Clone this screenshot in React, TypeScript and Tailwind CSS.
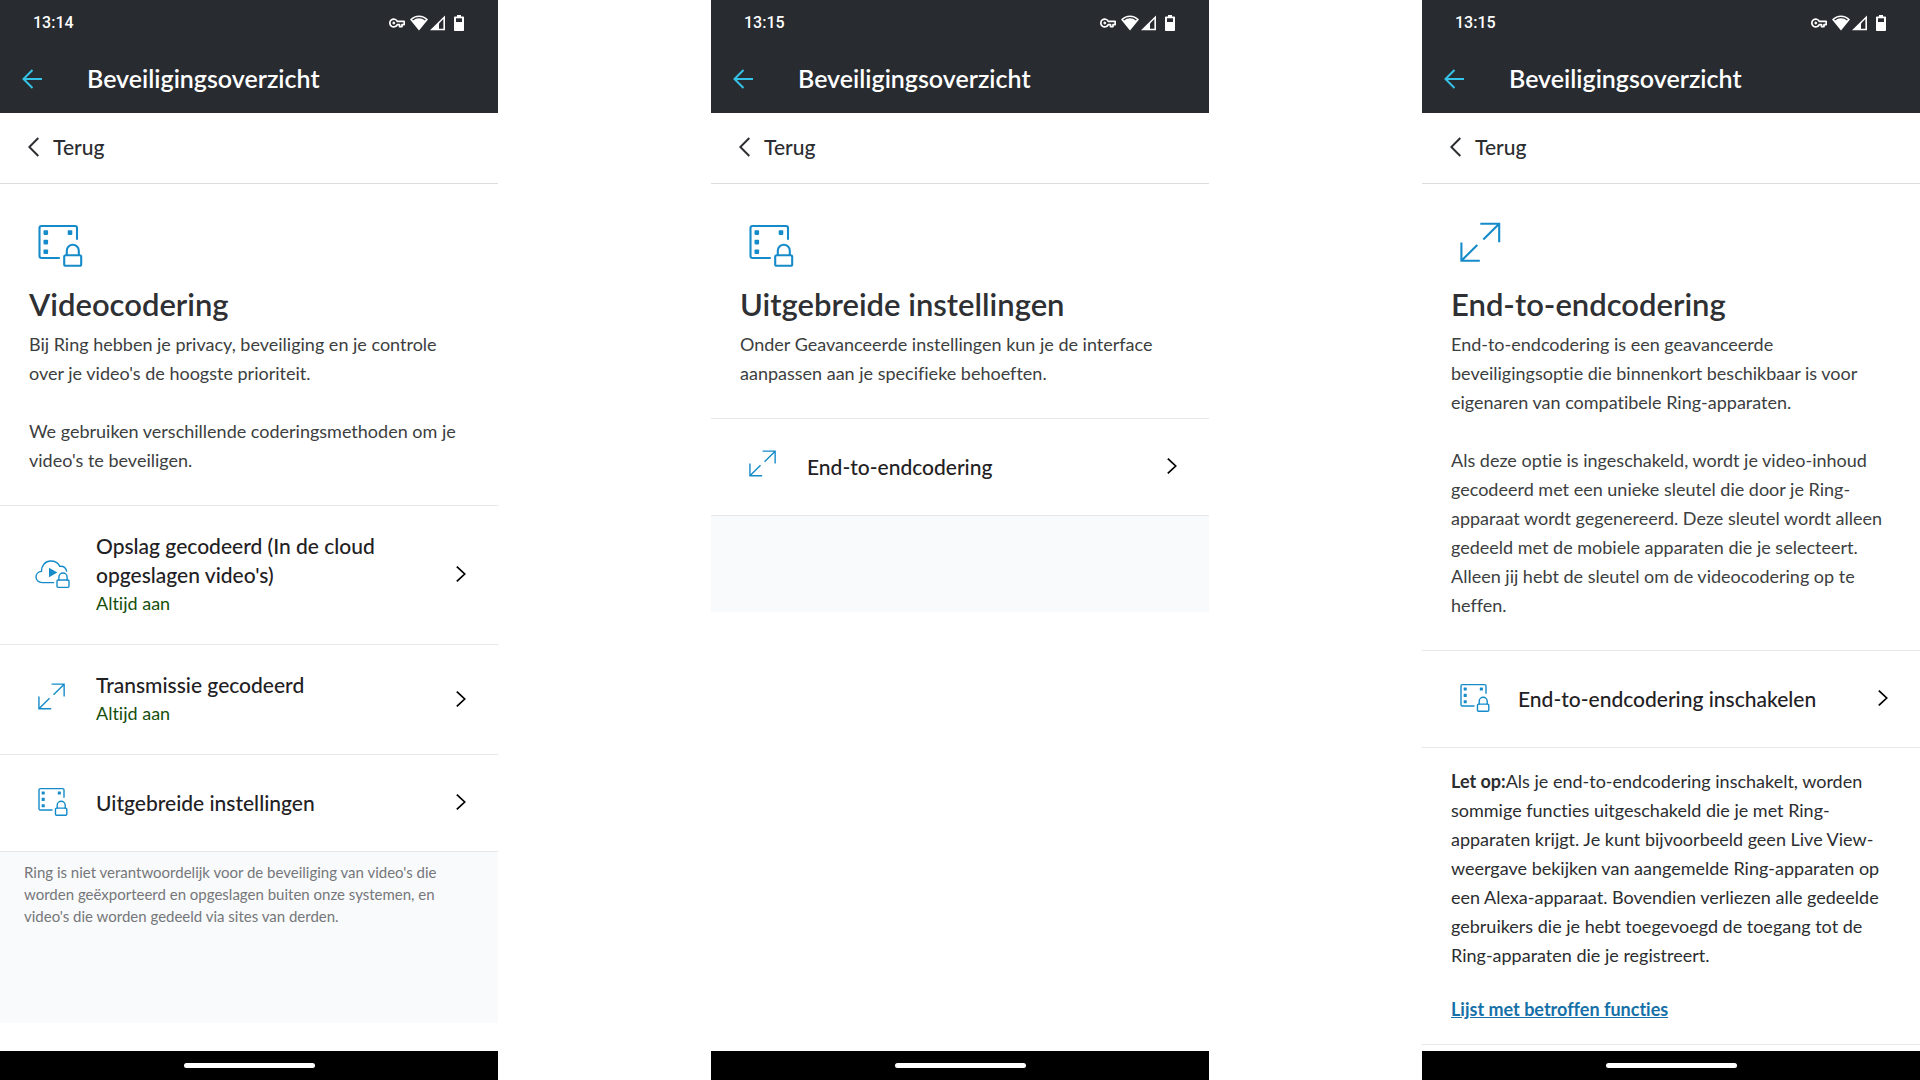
import type { ReactNode } from 'react';

type IconProps = { className?: string };

function FilmLockIcon({ className }: IconProps) {
  return (
    <svg viewBox="0 0 60 60" fill="none" stroke="currentColor" strokeWidth="2.1" strokeLinecap="round" className={className}>
      <path d="M30 42H12.5a2 2 0 0 1-2-2V12a2 2 0 0 1 2-2H46a2 2 0 0 1 2 2v11" />
      <g fill="currentColor" stroke="none">
        <rect x="14.5" y="14.3" width="4.6" height="4.6" rx="0.8" />
        <rect x="14.5" y="23.8" width="4.6" height="4.6" rx="0.8" />
        <rect x="14.5" y="33.4" width="4.6" height="4.6" rx="0.8" />
        <rect x="38.7" y="14.3" width="4.6" height="4.6" rx="0.8" />
      </g>
      <rect x="35.2" y="39.2" width="17" height="10.6" rx="1.6" />
      <path d="M37.8 39v-4.2a6 6 0 0 1 12 0V39" />
    </svg>
  );
}

function ArrowsIcon({ className }: IconProps) {
  return (
    <svg viewBox="0 0 60 60" fill="none" stroke="currentColor" strokeWidth="2.1" className={className}>
      <path d="M29.3 7.7H48.2V26.2M48.2 7.7L32.3 23.6" />
      <path d="M10.4 26.4V44.7H28.8M10.4 44.7L26.3 29" />
    </svg>
  );
}

function CloudLockIcon({ className }: IconProps) {
  return (
    <svg viewBox="0 0 60 60" fill="none" stroke="currentColor" strokeWidth="2.1" strokeLinecap="round" className={className}>
      <path d="M32.5 43H15.5C10 43 6 39.3 6 34.5C6 30 9.5 26.4 14.2 26C14.2 17 20 10.5 28 10.5C34.5 10.5 39.5 13.5 41.5 18.5C46.5 17.8 50.5 20.5 52 25.5" />
      <path d="M25.5 20.5L38 27.6L25.5 34.7Z" fill="currentColor" stroke="none" />
      <rect x="37.5" y="39" width="18" height="11" rx="1.6" />
      <path d="M40.3 39v-4.2a6.2 6.2 0 0 1 12.4 0V39" />
    </svg>
  );
}

function StatusIcons() {
  return (
    <div className="flex items-center">
      {/* VPN key */}
      <svg viewBox="0 0 16 10" className="h-[10px] w-4" fill="none" stroke="currentColor" strokeWidth="1.7">
        <path d="M8.3 3.4A3.9 3.9 0 1 0 8.3 6.6H10.5V8.6H13V6.6H15.2V3.4Z" strokeLinejoin="round" />
        <circle cx="4.8" cy="5" r="1" fill="currentColor" strokeWidth="1" />
      </svg>
      {/* wifi */}
      <svg viewBox="0 0 18 16" className="ml-[5px] h-4 w-[18px]">
        <path d="M9 15.5L0 4.5C5 -0.8 13 -0.8 18 4.5Z" fill="currentColor" />
        <path d="M2.6 5C6.4 1.9 11.6 1.9 15.4 5" fill="none" stroke="#282b30" strokeWidth="1.3" />
      </svg>
      {/* mobile signal */}
      <svg viewBox="0 0 16 16" className="ml-[2px] h-4 w-4">
        <path d="M0 15.3L15 0.5V15.3Z" fill="currentColor" />
        <path d="M9 8.5L13.4 4V13.7H9Z" fill="#282b30" />
      </svg>
      {/* battery */}
      <svg viewBox="0 0 10 16" className="ml-2 h-4 w-[10px]">
        <path d="M3 0H7V1.5H9.2a.8.8 0 0 1 .8.8V15.2a.8.8 0 0 1-.8.8H.8a.8.8 0 0 1-.8-.8V2.3a.8.8 0 0 1 .8-.8H3Z" fill="currentColor" />
        <rect x="2" y="3.3" width="6" height="3.7" fill="#282b30" />
      </svg>
    </div>
  );
}

type PhoneProps = { time: string; children: ReactNode };

function Phone({ time, children }: PhoneProps) {
  return (
    <section className="flex min-h-screen min-w-0 flex-col bg-white">
      <header className="bg-[#282b30] pb-[2px] text-white">
        <div className="flex h-[46px] items-center justify-between pr-[34px] pl-[33px]">
          <span className="font-[Roboto,sans-serif] text-base font-medium">{time}</span>
          <StatusIcons />
        </div>
        <div className="flex h-[65px] items-center gap-[45px] pl-[22px]">
          <button type="button" aria-label="Vorige" className="text-[#35c3e8]">
            <svg viewBox="0 0 20 20" className="size-5" fill="none" stroke="currentColor" strokeWidth="2">
              <path d="M20 10H1.5M10.5 1L1.5 10L10.5 19" />
            </svg>
          </button>
          <h1 className="text-[25px] font-semibold">Beveiligingsoverzicht</h1>
        </div>
      </header>

      <div className="flex h-[71px] items-center border-b border-[#dadede] pb-[2px] pl-7">
        <button type="button" className="flex items-center gap-[14px] text-[21px] font-medium text-[#2b2d30]">
          <svg viewBox="0 0 11 20" className="h-5 w-[11px]" fill="none" stroke="currentColor" strokeWidth="2">
            <path d="M10.3 1L1.3 10L10.3 19" />
          </svg>
          Terug
        </button>
      </div>

      <main className="flex-1">{children}</main>

      <footer className="flex h-[29px] items-center justify-center bg-black">
        <div className="h-[5px] w-[131px] rounded-full bg-white" />
      </footer>
    </section>
  );
}

type IntroProps = { icon: ReactNode; title: string; paragraphs: string[] };

function Intro({ icon, title, paragraphs }: IntroProps) {
  return (
    <div className="border-b border-[#e6e9ea] pt-8 pr-[35px] pb-[30px] pl-[29px]">
      <div className="text-[#158bc9]">{icon}</div>
      <h2 className="mt-2 mb-[6px] text-[31px] leading-10 font-semibold text-[#2e3033]">{title}</h2>
      <div className="flex flex-col gap-[29px] text-lg leading-[29px] text-[#3c3e40]">
        {paragraphs.map((text) => (
          <p key={text}>{text}</p>
        ))}
      </div>
    </div>
  );
}

type RowProps = { icon: ReactNode; title: string; status?: string };

function Row({ icon, title, status }: RowProps) {
  return (
    <button
      type="button"
      className="flex min-h-[97px] w-full items-center border-b border-[#e6e9ea] pt-[25px] pr-8 pb-[27px] pl-8 text-left leading-[29px]"
    >
      <span className="shrink-0 text-[#158bc9]">{icon}</span>
      <span className="ml-6 flex-1 pr-6">
        <span className="block text-[21px] font-medium text-[#1f2124]">{title}</span>
        {status && <span className="block text-lg text-[#15500c]">{status}</span>}
      </span>
      <svg viewBox="0 0 10 16" className="h-4 w-[10px] shrink-0 text-black" fill="none" stroke="currentColor" strokeWidth="1.7">
        <path d="M0.8 0.6L8.7 8L0.8 15.4" />
      </svg>
    </button>
  );
}

export default function App() {
  return (
    <div className="grid min-h-screen grid-cols-3 gap-x-[213px] bg-white font-[Lato,sans-serif] [font-variant-ligatures:none]">
      <Phone time="13:14">
        <Intro
          icon={<FilmLockIcon className="size-[60px]" />}
          title="Videocodering"
          paragraphs={[
            "Bij Ring hebben je privacy, beveiliging en je controle over je video's de hoogste prioriteit.",
            "We gebruiken verschillende coderingsmethoden om je video's te beveiligen.",
          ]}
        />
        <Row
          icon={<CloudLockIcon className="size-10" />}
          title="Opslag gecodeerd (In de cloud opgeslagen video's)"
          status="Altijd aan"
        />
        <Row icon={<ArrowsIcon className="size-10" />} title="Transmissie gecodeerd" status="Altijd aan" />
        <Row icon={<FilmLockIcon className="size-10" />} title="Uitgebreide instellingen" />
        <p className="bg-[#f9fafb] px-6 pt-[9px] pb-24 text-[15px] leading-[22px] text-[#75777a]">
          Ring is niet verantwoordelijk voor de beveiliging van video's die worden geëxporteerd en opgeslagen buiten
          onze systemen, en video's die worden gedeeld via sites van derden.
        </p>
      </Phone>

      <Phone time="13:15">
        <Intro
          icon={<FilmLockIcon className="size-[60px]" />}
          title="Uitgebreide instellingen"
          paragraphs={[
            'Onder Geavanceerde instellingen kun je de interface aanpassen aan je specifieke behoeften.',
          ]}
        />
        <Row icon={<ArrowsIcon className="size-10" />} title="End-to-endcodering" />
        <div className="h-24 bg-[#f9fafb]" />
      </Phone>

      <Phone time="13:15">
        <Intro
          icon={<ArrowsIcon className="size-[60px]" />}
          title="End-to-endcodering"
          paragraphs={[
            'End-to-endcodering is een geavanceerde beveiligingsoptie die binnenkort beschikbaar is voor eigenaren van compatibele Ring-apparaten.',
            'Als deze optie is ingeschakeld, wordt je video-inhoud gecodeerd met een unieke sleutel die door je Ring-apparaat wordt gegenereerd. Deze sleutel wordt alleen gedeeld met de mobiele apparaten die je selecteert. Alleen jij hebt de sleutel om de videocodering op te heffen.',
          ]}
        />
        <Row icon={<FilmLockIcon className="size-10" />} title="End-to-endcodering inschakelen" />
        <div className="border-b border-[#e6e9ea] pt-[19px] pr-[35px] pb-5 pl-[29px] text-lg leading-[29px] text-[#2b2d30]">
          <p>
            <strong>Let op:</strong>Als je end-to-endcodering inschakelt, worden sommige functies uitgeschakeld die je
            met Ring-apparaten krijgt. Je kunt bijvoorbeeld geen Live View-weergave bekijken van aangemelde
            Ring-apparaten op een Alexa-apparaat. Bovendien verliezen alle gedeelde gebruikers die je hebt toegevoegd
            de toegang tot de Ring-apparaten die je registreert.
          </p>
          <a href="#functies" className="mt-[25px] block w-fit font-bold text-[#1670a8] underline">
            Lijst met betroffen functies
          </a>
        </div>
      </Phone>
    </div>
  );
}
